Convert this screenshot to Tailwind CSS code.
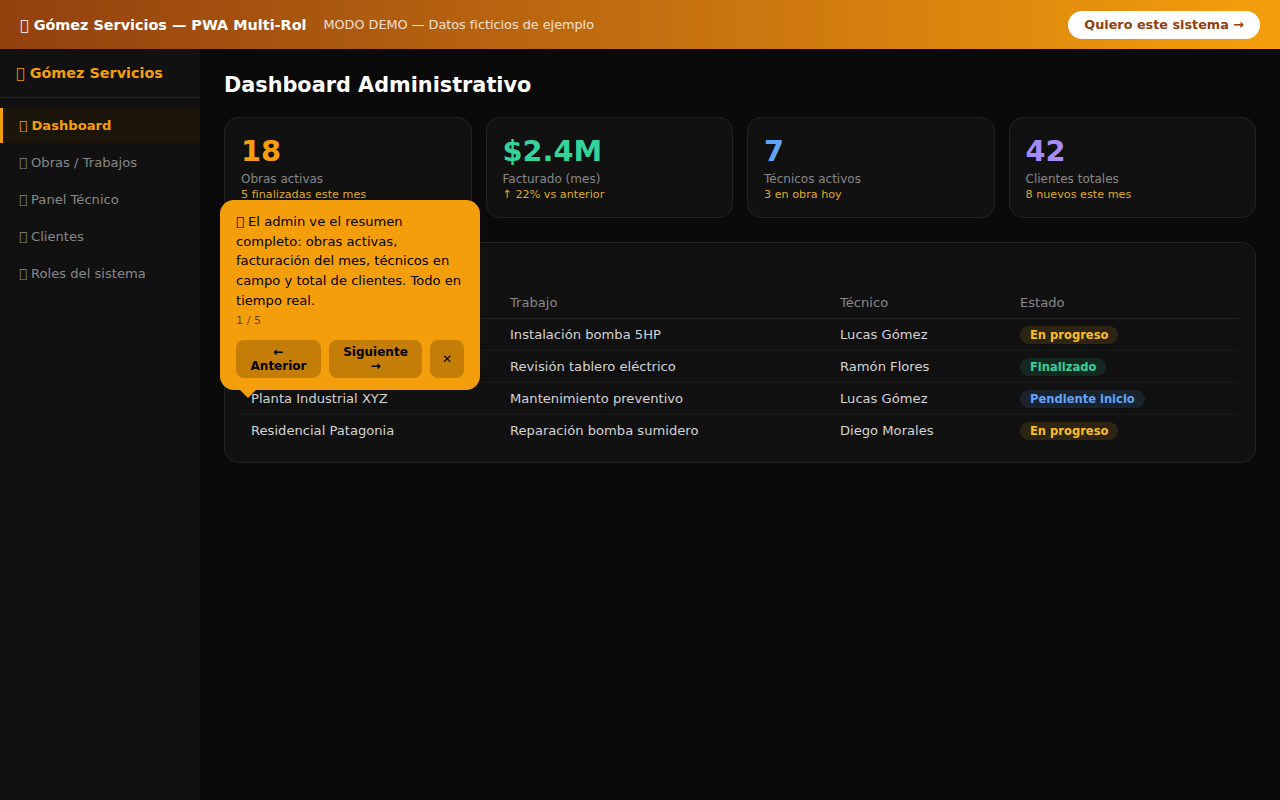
<!DOCTYPE html>
<html lang="es">
<head>
<meta charset="utf-8">
<title>Gómez Servicios</title>
<script src="https://cdn.jsdelivr.net/npm/@tailwindcss/browser@4"></script>
</head>
<body class="bg-[#0a0a0a] font-['DejaVu_Sans',sans-serif] h-[800px] overflow-hidden">
<header class="h-[49px] flex items-center justify-between pl-5 pr-5 bg-gradient-to-r from-[#92400e] to-[#f59e0b]">
  <div class="flex items-center gap-[17px]">
    <span class="mt-[2px] text-[14.4px] font-bold text-white">&#xE000; Gómez Servicios — PWA Multi-Rol</span>
    <span class="text-[12.8px] text-white/80">MODO DEMO — Datos ficticios de ejemplo</span>
  </div>
  <button class="h-[28px] px-4 rounded-full bg-white text-[#92400e] text-[12.8px] font-bold">Quiero este sistema →</button>
</header>
<div class="flex h-[751px]">
  <aside class="w-[200px] shrink-0 bg-[#111111]">
    <div class="h-[49px] pl-4 pt-[2px] flex items-center border-b border-[#222222] text-[14.4px] font-bold text-[#f59e0b]">&#xE000; Gómez Servicios</div>
    <nav class="pt-[10px] flex flex-col gap-[2px] text-[13.12px]">
      <a class="h-[35px] pl-4 flex items-center border-l-[3px] border-[#f59e0b] bg-[#1b1609] text-[#f59e0b] font-bold">&#xE000; Dashboard</a>
      <a class="h-[35px] pl-[19px] flex items-center text-[#888888]">&#xE000; Obras / Trabajos</a>
      <a class="h-[35px] pl-[19px] flex items-center text-[#888888]">&#xE000; Panel Técnico</a>
      <a class="h-[35px] pl-[19px] flex items-center text-[#888888]">&#xE000; Clientes</a>
      <a class="h-[35px] pl-[19px] flex items-center text-[#888888]">&#xE000; Roles del sistema</a>
    </nav>
  </aside>
  <main class="relative flex-1 p-6">
    <h1 class="text-[20.8px] font-bold text-white leading-[24px] mb-[20px]">Dashboard Administrativo</h1>
    <div class="grid grid-cols-4 gap-[14px] mb-6">
      <div class="h-[101px] rounded-[14px] border border-[#222222] bg-[#111111] px-4 pt-[17px]">
        <div class="text-[28.8px] leading-[33px] font-bold text-[#f59e0b]">18</div>
        <div class="text-xs leading-[15px] mt-[4px] text-[#888888]">Obras activas</div>
        <div class="text-[11.2px] leading-[14px] mt-[1px] text-[#fbbf24]/90">5 finalizadas este mes</div>
      </div>
      <div class="h-[101px] rounded-[14px] border border-[#222222] bg-[#111111] px-4 pt-[17px]">
        <div class="text-[28.8px] leading-[33px] font-bold text-[#34d399]">$2.4M</div>
        <div class="text-xs leading-[15px] mt-[4px] text-[#888888]">Facturado (mes)</div>
        <div class="text-[11.2px] leading-[14px] mt-[1px] text-[#fbbf24]/90">↑ 22% vs anterior</div>
      </div>
      <div class="h-[101px] rounded-[14px] border border-[#222222] bg-[#111111] px-4 pt-[17px]">
        <div class="text-[28.8px] leading-[33px] font-bold text-[#60a5fa]">7</div>
        <div class="text-xs leading-[15px] mt-[4px] text-[#888888]">Técnicos activos</div>
        <div class="text-[11.2px] leading-[14px] mt-[1px] text-[#fbbf24]/90">3 en obra hoy</div>
      </div>
      <div class="h-[101px] rounded-[14px] border border-[#222222] bg-[#111111] px-4 pt-[17px]">
        <div class="text-[28.8px] leading-[33px] font-bold text-[#a78bfa]">42</div>
        <div class="text-xs leading-[15px] mt-[4px] text-[#888888]">Clientes totales</div>
        <div class="text-[11.2px] leading-[14px] mt-[1px] text-[#fbbf24]/90">8 nuevos este mes</div>
      </div>
    </div>
    <section class="h-[221px] rounded-[14px] border border-[#222222] bg-[#111111] pl-[15px] pr-[16px] pt-[15px]">
      <h2 class="text-sm font-bold text-white leading-[17px] mb-[12px]">Obras recientes</h2>
      <table class="w-full table-fixed text-[13.12px] text-[#d4d4d4] [&_td]:pt-[2px] [&_th]:pt-[1px]">
        <colgroup><col class="w-[259px]"><col class="w-[330px]"><col class="w-[180px]"><col></colgroup>
        <thead>
          <tr class="h-[31px] border-b border-[#222222] text-left text-[#888888]">
            <th class="font-normal pl-[11px]">Cliente</th><th class="font-normal pl-[11px]">Trabajo</th><th class="font-normal pl-[11px]">Técnico</th><th class="font-normal pl-[11px]">Estado</th>
          </tr>
        </thead>
        <tbody>
          <tr class="h-[32px] border-b border-[#1a1a1a]">
            <td class="pl-[11px]">Edificio Centro</td><td class="pl-[11px]">Instalación bomba 5HP</td><td class="pl-[11px]">Lucas Gómez</td>
            <td class="pl-[11px]"><span class="inline-block rounded-full px-[10px] leading-[18px] text-[11.52px] font-bold bg-[#fbbf24]/12 text-[#fbbf24]">En progreso</span></td>
          </tr>
          <tr class="h-[32px] border-b border-[#1a1a1a]">
            <td class="pl-[11px]">Comercio Norte</td><td class="pl-[11px]">Revisión tablero eléctrico</td><td class="pl-[11px]">Ramón Flores</td>
            <td class="pl-[11px]"><span class="inline-block rounded-full px-[10px] leading-[18px] text-[11.52px] font-bold bg-[#34d399]/12 text-[#34d399]">Finalizado</span></td>
          </tr>
          <tr class="h-[32px] border-b border-[#1a1a1a]">
            <td class="pl-[11px]">Planta Industrial XYZ</td><td class="pl-[11px]">Mantenimiento preventivo</td><td class="pl-[11px]">Lucas Gómez</td>
            <td class="pl-[11px]"><span class="inline-block rounded-full px-[10px] leading-[18px] text-[11.52px] font-bold bg-[#60a5fa]/12 text-[#60a5fa]">Pendiente inicio</span></td>
          </tr>
          <tr class="h-[32px] border-b border-transparent">
            <td class="pl-[11px]">Residencial Patagonia</td><td class="pl-[11px]">Reparación bomba sumidero</td><td class="pl-[11px]">Diego Morales</td>
            <td class="pl-[11px]"><span class="inline-block rounded-full px-[10px] leading-[18px] text-[11.52px] font-bold bg-[#fbbf24]/12 text-[#fbbf24]">En progreso</span></td>
          </tr>
        </tbody>
      </table>
    </section>
    <div class="absolute left-[20px] top-[151px] w-[260px] h-[190px] rounded-[14px] bg-[#f59e0b] px-4 pt-3 text-black">
      <p class="text-[13.12px] leading-[19.68px]">&#xE000; El admin ve el resumen completo: obras activas, facturación del mes, técnicos en campo y total de clientes. Todo en tiempo real.</p>
      <div class="text-[11.2px] leading-[14px] mt-[4px] text-black/60">1 / 5</div>
      <div class="flex gap-2 mt-[12px]">
        <button class="w-[85px] h-[38px] px-[14px] rounded-lg bg-black/20 text-xs font-bold leading-[14px] text-black">← Anterior</button>
        <button class="w-[93px] h-[38px] px-[14px] rounded-lg bg-black/20 text-xs font-bold leading-[14px] text-black">Siguiente →</button>
        <button class="w-[34px] h-[38px] rounded-lg bg-black/20 text-xs font-bold text-black">✕</button>
      </div>
      <div class="absolute left-[20px] bottom-[-8px] w-0 h-0 border-x-[8px] border-x-transparent border-t-[8px] border-t-[#f59e0b]"></div>
    </div>
  </main>
</div>
</body>
</html>
